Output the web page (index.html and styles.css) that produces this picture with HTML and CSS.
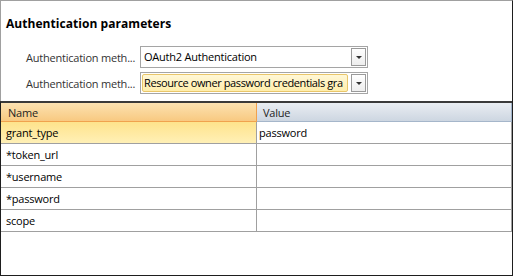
FILE: index.html
```html
<!DOCTYPE html>
<html>
<head>
<meta charset="utf-8">
<link rel="stylesheet" href="styles.css">
</head>
<body>
<div class="frame">
  <div class="top">
    <div class="title">Authentication parameters</div>
    <div class="form">
      <div class="form-row">
        <div class="label">Authentication meth...</div>
        <div class="combo">
          <div class="combo-text">OAuth2 Authentication</div>
          <div class="combo-btn"><span class="arrow"></span></div>
        </div>
      </div>
      <div class="form-row">
        <div class="label">Authentication meth...</div>
        <div class="combo">
          <div class="combo-text focused">Resource owner password credentials gra</div>
          <div class="combo-btn"><span class="arrow"></span></div>
        </div>
      </div>
    </div>
  </div>
  <div class="grid">
    <div class="grid-row header">
      <div class="cell name-h">Name</div>
      <div class="cell value-h">Value</div>
    </div>
    <div class="grid-row">
      <div class="cell name selected">grant_type</div>
      <div class="cell value">password</div>
    </div>
    <div class="grid-row">
      <div class="cell name">*token_url</div>
      <div class="cell value"></div>
    </div>
    <div class="grid-row">
      <div class="cell name">*username</div>
      <div class="cell value"></div>
    </div>
    <div class="grid-row">
      <div class="cell name">*password</div>
      <div class="cell value"></div>
    </div>
    <div class="grid-row">
      <div class="cell name">scope</div>
      <div class="cell value"></div>
    </div>
  </div>
</div>
</body>
</html>
```
FILE: styles.css
```css
html, body {
  margin: 0;
  padding: 0;
  background: #ffffff;
}
body {
  font-family: "Open Sans", "Noto Sans", sans-serif;
  font-size: 11px;
  letter-spacing: -0.22px;
  color: #000;
}
.frame {
  width: 513px;
  height: 276px;
  box-sizing: border-box;
  border-top: 1px solid #a0a0a0;
  border-right: 1px solid #1e1e1e;
  border-bottom: 1px solid #1e1e1e;
  display: flex;
  flex-direction: column;
  background: #fff;
}
.top {
  height: 100px;
  box-sizing: border-box;
  border-left: 1px solid #a0a0a0;
  padding: 15px 0 0 5px;
}
.title {
  font-weight: bold;
  font-size: 12px;
  letter-spacing: 0.05px;
  line-height: 16px;
  height: 16px;
}
.form {
  margin-top: 14px;
  padding-left: 20px;
  display: flex;
  flex-direction: column;
  gap: 4px;
}
.form-row {
  display: flex;
  align-items: center;
}
.label {
  width: 114px;
  color: #333;
  white-space: nowrap;
}
.combo {
  width: 228px;
  height: 22px;
  box-sizing: border-box;
  border: 1px solid #a5a5a5;
  padding: 1px;
  display: flex;
  gap: 3px;
}
.combo-text {
  flex: 1;
  min-width: 0;
  height: 18px;
  box-sizing: border-box;
  border: 1px solid transparent;
  padding-left: 1px;
  line-height: 16px;
  white-space: nowrap;
  overflow: hidden;
}
.combo-text.focused {
  border-color: #e9c66a;
  border-radius: 2px;
  background: linear-gradient(#fff7d6, #ffeeac);
  letter-spacing: -0.4px;
}
.combo-btn {
  width: 15px;
  height: 18px;
  box-sizing: border-box;
  border: 1px solid #9a9a9a;
  background: linear-gradient(#ffffff, #eeeeee);
  display: flex;
  align-items: center;
  justify-content: center;
}
.arrow {
  width: 0;
  height: 0;
  border-left: 3px solid transparent;
  border-right: 3px solid transparent;
  border-top: 3px solid #333;
  margin-top: 1px;
}
.grid {
  flex: 1;
  border-top: 2px solid #3a3a3a;
  border-left: 1px solid #1e1e1e;
  display: flex;
  flex-direction: column;
}
.grid-row {
  display: flex;
  height: 22px;
  box-sizing: border-box;
  border-bottom: 1px solid #a0a0a0;
}
.cell {
  box-sizing: border-box;
  white-space: nowrap;
  overflow: hidden;
  display: flex;
  align-items: center;
}
.name {
  width: 256px;
  border-right: 1px solid #a0a0a0;
  padding-left: 5px;
}
.value {
  flex: 1;
  border-right: 1px solid #a0a0a0;
  padding-left: 2px;
}
.selected {
  background: linear-gradient(#fee38c, #fff0b6);
}
.grid-row.header {
  height: 19px;
  border-bottom: none;
}
.name-h {
  width: 256px;
  padding-left: 7px;
  background: linear-gradient(#fce2b1, #f8c981);
  border-right: 1px solid #f0a24e;
  border-bottom: 1px solid #f0a24e;
  color: #1e1e1e;
}
.value-h {
  flex: 1;
  padding-left: 6px;
  background: linear-gradient(#e9edf2, #cdd6e1);
  border-right: 1px solid #9fb3ca;
  border-bottom: 1px solid #a5b6ca;
  color: #1e1e1e;
}
```
